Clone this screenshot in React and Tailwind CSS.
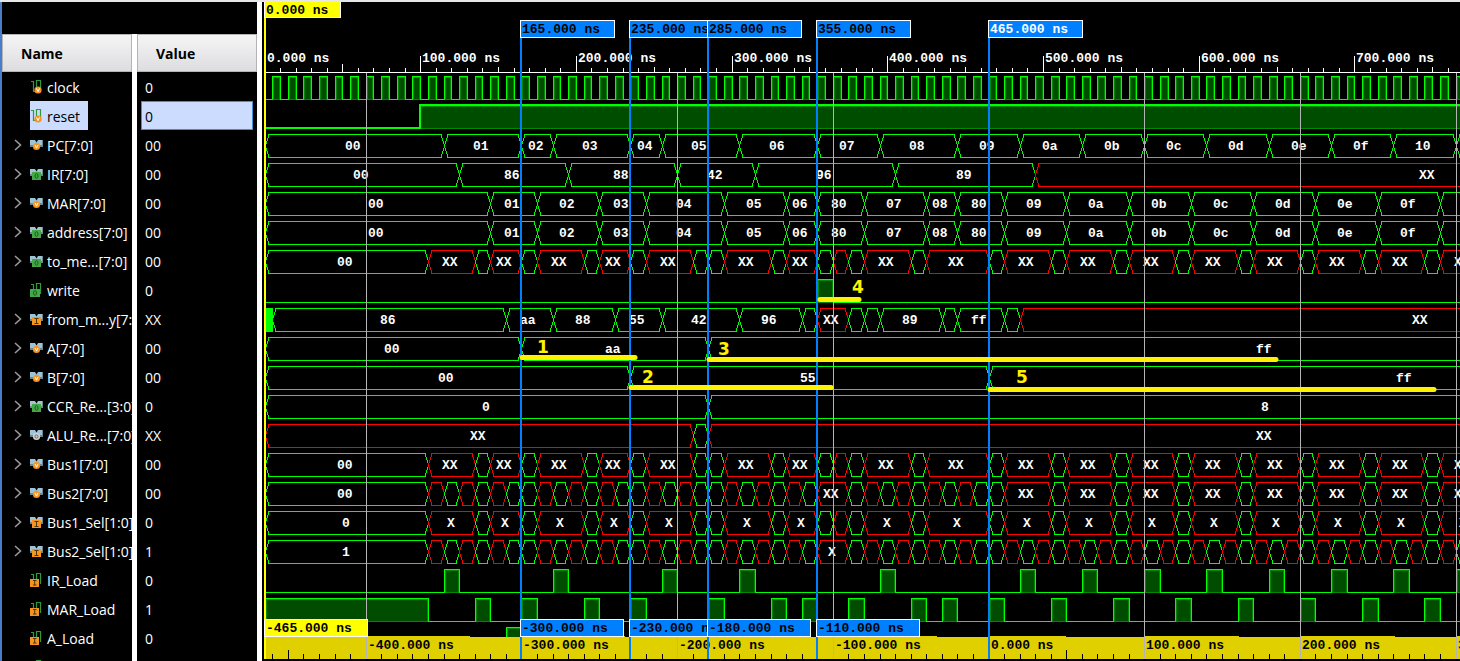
import React from "react";

const SIGNALS = [
  { name: "clock", value: "0", icon: "wire-v" },
  { name: "reset", value: "0", icon: "wire-v", selected: true },
  { name: "PC[7:0]", value: "00", icon: "bus-v" },
  { name: "IR[7:0]", value: "00", icon: "bus-o" },
  { name: "MAR[7:0]", value: "00", icon: "bus-v" },
  { name: "address[7:0]", value: "00", icon: "bus-o" },
  { name: "to_me...[7:0]", value: "00", icon: "bus-o" },
  { name: "write", value: "0", icon: "wire-o" },
  { name: "from_m...y[7:0]", value: "XX", icon: "bus-i" },
  { name: "A[7:0]", value: "00", icon: "bus-v" },
  { name: "B[7:0]", value: "00", icon: "bus-v" },
  { name: "CCR_Re...[3:0]", value: "0", icon: "bus-o" },
  { name: "ALU_Re...[7:0]", value: "XX", icon: "bus-g" },
  { name: "Bus1[7:0]", value: "00", icon: "bus-v" },
  { name: "Bus2[7:0]", value: "00", icon: "bus-v" },
  { name: "Bus1_Sel[1:0]", value: "0", icon: "bus-i" },
  { name: "Bus2_Sel[1:0]", value: "1", icon: "bus-i" },
  { name: "IR_Load", value: "0", icon: "wire-i" },
  { name: "MAR_Load", value: "1", icon: "wire-i" },
  { name: "A_Load", value: "0", icon: "wire-i" },
];

// Horizontal axis: nanoseconds to pixels inside the waveform pane.
const ORIGIN = 3;
const SCALE = 1.557;
const LAST = 1000;
const px = (t) => Math.floor(ORIGIN + SCALE * t);

// Each segment is [end time, label, colour]; "r" marks an unknown value.
const seg = (text) =>
  text.split(" ").map((s) => {
    const [end, label = "", color = "g"] = s.split(":");
    return { end: Number(end), label, color };
  });

const alternate = (from, to, first) => {
  const out = [];
  let red = first === "r";
  for (let t = from; t < to; t += 10) {
    out.push({ end: t + 10, label: "", color: red ? "r" : "g" });
    red = !red;
  }
  return out;
};

const MAR = seg(
  "145:00 175:01 215:02 245:03 295:04 335:05 355:06 385:80 425:07 445:08 475:80 515:09 555:0a 595:0b 635:0c 675:0d 715:0e 755:0f 795"
);

const bus1 = (zero, x) =>
  seg(
    `105:${zero} 135:${x}:r 145 165:${x}:r 175 205:${x}:r 215 235:${x}:r 245 275:${x}:r 285 295 325:${x}:r 335 355:${x}:r 365 375::r 385 415:${x}:r 425 465:${x}:r 475 505:${x}:r 515 545:${x}:r 555 585:${x}:r 595 625:${x}:r 635 665:${x}:r 675 705:${x}:r 715 745:${x}:r 755 785:${x}:r`
  );

const bus2Head = (zero, x) => [
  ...seg(`105:${zero}`),
  ...alternate(105, 165, "r"),
  ...seg("175"),
  ...alternate(175, 235, "r"),
  ...seg("245"),
  ...alternate(245, 285, "r"),
  ...seg("295"),
  ...alternate(295, 355, "r"),
  ...seg(`375:${x}:r 385`),
  ...alternate(385, 465, "r"),
  ...seg("475"),
];

const BUSES = [
  [2, 0, seg("115:00 165:01 185:02 235:03 255:04 305:05 355:06 395:07 445:08 485:09 525:0a 565:0b 605:0c 645:0d 685:0e 725:0f 765:10 805")],
  [3, 0, seg(`125:00 195:86 265:88 315:42 405:96 495:89 ${LAST}:XX:r`)],
  [4, 0, MAR],
  [5, 0, MAR],
  [6, 0, bus1("00", "XX")],
  [8, 5, seg(`155:86 185:aa 225:88 255:55 305:42 345:96 355 375:XX:r 385 395 435:89 445 475:ff 485 ${LAST}:XX:r`)],
  [9, 0, seg(`165:00 285:aa ${LAST}:ff`)],
  [10, 0, seg(`235:00 465:55 ${LAST}:ff`)],
  [11, 0, seg(`285:0 ${LAST}:8`)],
  [12, 0, seg(`275:XX:r 285 ${LAST}:XX:r`)],
  [13, 0, bus1("00", "XX")],
  [14, 0, [...bus2Head("00", "XX"), ...bus1("00", "XX").filter((s) => s.end > 475)]],
  [15, 0, bus1("0", "X")],
  [16, 0, [...bus2Head("1", "X"), ...alternate(475, 795, "r")]],
];

const WIRES = [
  [0, Array.from({ length: 99 }, (_, i) => [5 + 10 * i, 10 + 10 * i])],
  [7, [[355, 365]]],
  [17, [115, 185, 255, 305, 395, 485, 525, 565, 605, 645, 685, 725, 765].map((t) => [t, t + 10])],
  [18, [[0, 105], ...[135, 165, 205, 235, 285, 325, 345, 375, 415, 435, 465, 505, 545, 585, 625, 665, 705, 745].map((t) => [t, t + 10])]],
  [19, [[155, 165]]],
];

const MARKERS = [
  { t: 165, top: "165.000 ns", bottom: "-300.000 ns" },
  { t: 235, top: "235.000 ns", bottom: "-230.000 ns" },
  { t: 285, top: "285.000 ns", bottom: "-180.000 ns" },
  { t: 355, top: "355.000 ns", bottom: "-110.000 ns" },
  { t: 465, top: "465.000 ns", active: true },
];

const NOTES = [
  { n: "1", x: 275, y: 353, x1: 260, x2: 373, ly: 357 },
  { n: "2", x: 380, y: 383, x1: 369, x2: 569, ly: 387 },
  { n: "3", x: 456, y: 355, x1: 447, x2: 1014, ly: 359 },
  { n: "4", x: 590, y: 293, x1: 558, x2: 597, ly: 299 },
  { n: "5", x: 754, y: 383, x1: 728, x2: 1172, ly: 389 },
];

const mid = (row) => 88 + 29 * row;

function Bus({ row, start, segments }) {
  const c = mid(row);
  let from = start;
  return (
    <g>
      {segments.map((s, i) => {
        const a = px(from);
        const b = px(s.end);
        from = s.end;
        return (
          <g key={i}>
            <path
              d={`M${a + 0.5} ${c} L${a + 4} ${c - 11.5} H${b - 3} L${b + 0.5} ${c} L${b - 3} ${c + 11.5} H${a + 4} Z`}
              fill="none"
              stroke={s.color === "r" ? "#ff0000" : "#00ff00"}
              shapeRendering="crispEdges"
            />
            {s.label && (
              <text x={Math.floor((a + b) / 2) - (s.label.length > 1 ? 9 : 4)} y={c + 4} fill="#fff">
                {s.label}
              </text>
            )}
          </g>
        );
      })}
    </g>
  );
}

function Wire({ row, highs }) {
  const top = mid(row) - 12;
  const base = mid(row) + 11;
  let d = `M${ORIGIN + 1} ${base + 0.5}`;
  highs.forEach(([a, b]) => {
    d += ` H${px(a) + 0.5} V${top + 0.5} H${px(b) + 0.5} V${base + 0.5}`;
  });
  d += ` H${px(LAST)}`;
  return (
    <g shapeRendering="crispEdges">
      {highs.map(([a, b]) => (
        <rect key={a} x={px(a) + 1.5} y={top + 1.5} width={px(b) - px(a) - 2} height={22} fill="#004d00" stroke="#008a00" />
      ))}
      <path d={d} fill="none" stroke="#00ff00" />
    </g>
  );
}

function Flag({ x, y, w, h, fill, color, children }) {
  return (
    <g>
      <rect x={x + 0.5} y={y + 0.5} width={w - 1} height={h - 1} fill={fill} stroke="#fff" shapeRendering="crispEdges" />
      <text x={x + 2} y={y + 13} fill={color}>
        {children}
      </text>
    </g>
  );
}

function Ruler() {
  const ticks = [];
  for (let t = 10; t <= LAST; t += 10) {
    const top = t % 100 === 0 ? 56 : t === 50 ? 64 : t % 50 === 0 ? 67 : 68;
    ticks.push(<path key={t} d={`M${px(t) + 0.5} ${top} V72`} />);
  }
  return (
    <g>
      <g stroke="#fff" shapeRendering="crispEdges">
        <path d={`M${ORIGIN + 1} 72.5 H${px(LAST)}`} />
        {ticks}
      </g>
      {[0, 100, 200, 300, 400, 500, 600, 700].map((t) => (
        <text key={t} x={px(t) + 2} y={62} fill="#fff">
          {`${t}.000 ns`}
        </text>
      ))}
    </g>
  );
}

function OffsetRuler() {
  const ticks = [];
  for (let t = -460; t <= 500; t += 10) {
    if (t % 100 === 0) continue;
    const top = t === -450 || t === 50 ? 650 : 654;
    ticks.push(<path key={t} d={`M${px(t + 465) + 0.5} ${top} V659`} />);
  }
  const labels = [-400, -300, -200, -100, 0, 100, 200, 300];
  return (
    <g>
      <rect x={ORIGIN + 1} y={637} width={px(LAST)} height={22} fill="#e0d000" />
      {labels.map((t) => (
        <rect key={t} x={px(t + 465)} y={636} width={t < 0 ? 104 : t === 0 ? 77 : 95} height={2} fill="#e0d000" />
      ))}
      <g stroke="#000" shapeRendering="crispEdges">{ticks}</g>
    </g>
  );
}

function Waveforms() {
  const offsets = [-400, -300, -200, -100, 0, 100, 200, 300];
  return (
    <svg
      role="img"
      aria-label="Waveforms"
      className="block h-[659px] w-full bg-black font-['Liberation_Mono',monospace] text-[13px] font-bold"
    >
      <g transform="translate(0 -2)">
        <Ruler />
        {WIRES.map(([row, highs]) => (
          <Wire key={row} row={row} highs={highs} />
        ))}
        <g shapeRendering="crispEdges">
          <rect x={px(100)} y={106} width={px(LAST)} height={22} fill="#004d00" />
          <path d={`M${px(100)} 128.5 H${px(LAST)} M${px(100) + 2} 106.5 H${px(LAST)}`} stroke="#008a00" />
          <path d={`M${ORIGIN + 1} 128 H${px(100)} V105 H${px(LAST)}`} fill="none" stroke="#00ff00" strokeWidth="2" />
        </g>
        <rect x={ORIGIN + 1} y={308} width={7} height={24} fill="#00ff00" />
        {BUSES.map(([row, start, segments]) => (
          <Bus key={row} row={row} start={start} segments={segments} />
        ))}
        <OffsetRuler />
        <g stroke="#b4b4b4" shapeRendering="crispEdges">
          {[65, 265, 365, 565, 665, 765].map((t) => (
            <path key={t} d={`M${px(t) + 0.5} 73 V659`} />
          ))}
        </g>
        {offsets.map((t) => (
          <text key={t} x={px(t + 465) + 2} y={649} fill="#000">
            {`${t}.000 ns`}
          </text>
        ))}
        <rect x={2} y={0} width={2} height={659} fill="#ffff00" />
        <Flag x={2} y={1} w={77} h={17} fill="#ffff00" color="#000">0.000 ns</Flag>
        <Flag x={2} y={619} w={104} h={18} fill="#ffff00" color="#000">-465.000 ns</Flag>
        {MARKERS.map((m) => (
          <g key={m.t}>
            <rect x={px(m.t) - 1} y={20} width={2} height={639} fill="#0080ff" />
            <Flag x={px(m.t) - 1} y={20} w={95} h={18} fill="#0080ff" color={m.active ? "#fff" : "#000"}>
              {m.top}
            </Flag>
            {m.bottom && (
              <Flag x={px(m.t) - 1} y={619} w={104} h={18} fill="#0080ff" color="#000">
                {m.bottom}
              </Flag>
            )}
          </g>
        ))}
        {NOTES.map((a) => (
          <g key={a.n}>
            <path d={`M${a.x1} ${a.ly + 0.5} H${a.x2}`} stroke="#fff200" strokeWidth="5" strokeLinecap="round" />
            <text x={a.x} y={a.y} fill="#fff200" className="font-['DejaVu_Sans',sans-serif] text-[17px] font-bold">
              {a.n}
            </text>
          </g>
        ))}
      </g>
    </svg>
  );
}

function SignalIcon({ kind }) {
  const [shape, badge] = kind.split("-");
  const wire = shape === "wire";
  const cx = wire ? 8 : 6.5;
  const cy = wire ? 10 : 8.5;
  return (
    <svg aria-hidden="true" width="14" height="14" viewBox="0 0 14 14" className="shrink-0">
      {wire ? (
        <path d="M1 1.5H3.5V11.5H6.5V0.5H10.5V11" fill="none" stroke="#2f9a3d" strokeWidth="1.2" />
      ) : (
        <>
          <path d="M0 2H5L6.5 4.5L8 2H13V9H0Z" fill="#9cc3d6" />
          <path d="M0 7H3V9H0ZM10 7H13V9H10ZM12 2H13V7H12Z" fill="#6d8792" />
        </>
      )}
      {badge === "v" && (
        <>
          <circle cx={cx} cy={cy} r="3.6" fill="#f7941d" />
          <path d={`M${cx - 1.5} ${cy - 1.6}L${cx} ${cy + 1.6}L${cx + 1.5} ${cy - 1.6}`} fill="none" stroke="#fff" strokeWidth="1" />
        </>
      )}
      {badge === "g" && (
        <>
          <circle cx={cx} cy={cy} r="3.6" fill="#d2d2d2" />
          <circle cx={cx} cy={cy} r="1.6" fill="none" stroke="#666" strokeWidth="1" />
        </>
      )}
      {badge === "i" && (
        <>
          <rect x={wire ? 0 : 2} y={wire ? 6 : 5} width="9" height="8" fill="#f7941d" />
          <path d={wire ? "M3 7.5H6.5M4.7 7.5V12M3 12H6.5" : "M4.5 6.5H8.5M6.5 6.5V11.5M4.5 11.5H8.5"} fill="none" stroke="#4a3512" strokeWidth="1" />
        </>
      )}
      {badge === "o" && (
        <>
          <rect x={wire ? 0 : 2} y={wire ? 6 : 5} width={wire ? 10 : 9} height="8" fill="#45a847" />
          <ellipse cx={wire ? 5 : 6.5} cy={wire ? 10 : 9} rx="1.5" ry="2.3" fill="none" stroke="#1c5a24" strokeWidth="1" />
        </>
      )}
    </svg>
  );
}

function Row({ signal }) {
  const bus = signal.icon.startsWith("bus");
  return (
    <tr className="h-[29px]">
      <td className="overflow-hidden border-r-[5px] border-white p-0">
        <div className="flex h-[29px] items-center">
          <div className="flex w-7 shrink-0 justify-center pl-1">
            {bus && (
              <button type="button" aria-label={`Expand ${signal.name}`} className="flex h-4 w-4 items-center justify-center">
                <svg aria-hidden="true" width="8" height="12" viewBox="0 0 8 12">
                  <path d="M1 1L6.5 6L1 11" fill="none" stroke="#9a9a9a" strokeWidth="1.6" />
                </svg>
              </button>
            )}
          </div>
          <div
            className={
              signal.selected
                ? "flex h-full shrink-0 items-center gap-[3px] bg-[#cbdcff] pr-2 text-black"
                : "flex h-full shrink-0 items-center gap-[3px]"
            }
          >
            <SignalIcon kind={signal.icon} />
            <span className="whitespace-nowrap pt-[3px]">{signal.name}</span>
          </div>
        </div>
      </td>
      <td className="p-0 pl-1 pr-1">
        <div
          className={
            signal.selected
              ? "flex h-[29px] items-center border border-[#3f8fd2] bg-[#cbdcff] pl-[3px] pt-[3px] text-black"
              : "flex h-[29px] items-center pl-1 pt-[3px]"
          }
        >
          {signal.value}
        </div>
      </td>
    </tr>
  );
}

export default function App() {
  return (
    <main className="flex h-screen flex-col overflow-hidden bg-black font-['Open_Sans','Noto_Sans',sans-serif] text-sm text-white">
      <div className="h-[2px] w-full shrink-0 bg-[#e6e7e8]" />
      <div className="flex min-h-0 flex-1">
        <section className="w-[262px] shrink-0 overflow-hidden border-l-2 border-r-[5px] border-l-[#4a7cc9] border-r-white pt-8">
          <table className="w-full table-fixed border-separate border-spacing-0">
            <colgroup>
              <col className="w-[135px]" />
              <col />
            </colgroup>
            <thead>
              <tr className="text-left text-black">
                <th className="border-r-[5px] border-white p-0">
                  <div className="flex h-[38px] items-center border border-[#b4b4b6] bg-linear-to-b from-[#f5f5f5] to-[#dddde0] pl-[18px] pt-[2px]">Name</div>
                </th>
                <th className="p-0">
                  <div className="flex h-[38px] items-center border border-[#b4b4b6] bg-linear-to-b from-[#f5f5f5] to-[#dddde0] pl-[18px] pt-[2px]">Value</div>
                </th>
              </tr>
            </thead>
            <tbody>
              {SIGNALS.map((s) => (
                <Row key={s.name} signal={s} />
              ))}
              <tr aria-hidden="true">
                <td className="border-r-[5px] border-white p-0">
                  <div className="flex h-[29px] items-center pl-7">
                    <SignalIcon kind="wire-i" />
                  </div>
                </td>
                <td className="p-0" />
              </tr>
            </tbody>
          </table>
        </section>
        <section className="min-w-0 flex-1 overflow-hidden">
          <Waveforms />
        </section>
      </div>
    </main>
  );
}
